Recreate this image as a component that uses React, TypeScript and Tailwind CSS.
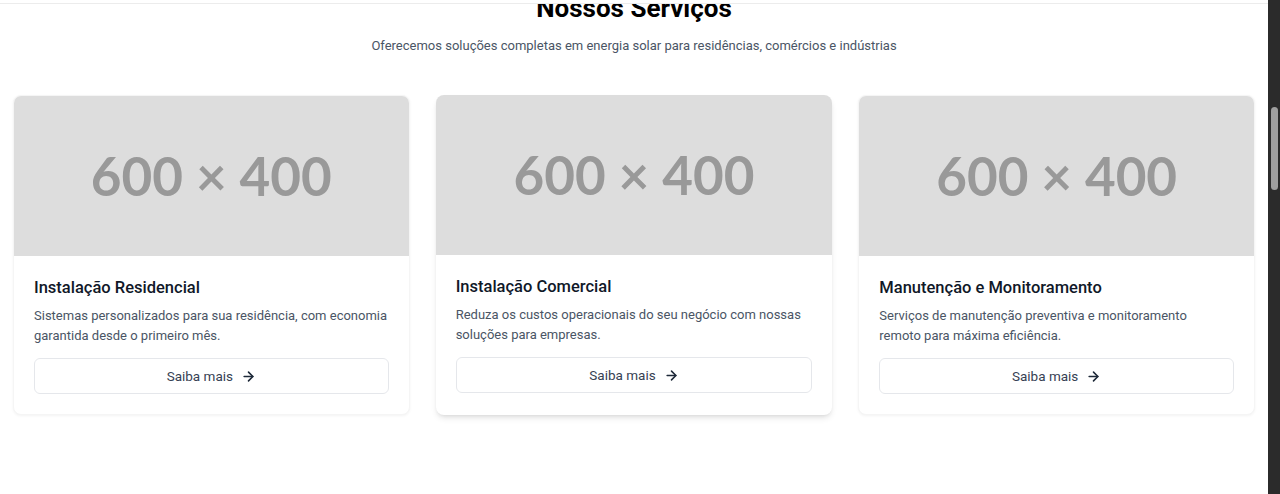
import { ArrowRight } from 'lucide-react'

const services = [
  {
    title: 'Instalação Residencial',
    lines: ['Sistemas personalizados para sua residência, com economia', 'garantida desde o primeiro mês.'],
  },
  {
    title: 'Instalação Comercial',
    lines: ['Reduza os custos operacionais do seu negócio com nossas', 'soluções para empresas.'],
    hovered: true,
  },
  {
    title: 'Manutenção e Monitoramento',
    lines: ['Serviços de manutenção preventiva e monitoramento', 'remoto para máxima eficiência.'],
  },
]

function Placeholder() {
  return (
    <div className="h-40 bg-[#dddddd] flex items-center justify-center">
      <span className="text-[53px] font-bold text-[#999999] font-['Lato',sans-serif]">600 × 400</span>
    </div>
  )
}

export default function App() {
  return (
    <div className="flex h-[494px] bg-white font-['Roboto',sans-serif]">
      <div className="flex-1 flex flex-col overflow-hidden">
        <div className="h-[3px] shrink-0 bg-white border-b border-[#ececec] box-content" />
        <div className="flex-1 overflow-hidden">
          <section className="-mt-[14px] px-[13px]">
            <div className="text-center mb-[39px]">
              <h2 className="text-[26px] leading-9 font-bold text-black mb-2.5">Nossos Serviços</h2>
              <p className="text-[13px] leading-5 text-gray-600">
                Oferecemos soluções completas em energia solar para residências, comércios e indústrias
              </p>
            </div>

            <div className="grid grid-cols-3 gap-[26px]">
              {services.map((s) => (
                <div
                  key={s.title}
                  className={`bg-white rounded-lg overflow-hidden ${
                    s.hovered ? 'shadow-md' : 'shadow-[0_1px_3px_rgba(0,0,0,0.05)] border border-[#f5f5f5]'
                  }`}
                >
                  <Placeholder />
                  <div className="p-5">
                    <h3 className="text-[16.5px] font-medium text-gray-900 leading-6 mb-1.5">{s.title}</h3>
                    <p className="text-[13px] text-gray-600 leading-5">
                      {s.lines[0]}
                      <br />
                      {s.lines[1]}
                    </p>
                    <button className="mt-3 w-full h-9 border border-gray-200 rounded-md text-[13.5px] text-gray-700 flex items-center justify-center gap-2">
                      Saiba mais
                      <ArrowRight size={15} strokeWidth={2.5} className="text-gray-800" />
                    </button>
                  </div>
                </div>
              ))}
            </div>
          </section>
        </div>
      </div>

      <div className="w-3 shrink-0 bg-[#2b2b2b] pt-[107px] flex justify-center">
        <div className="w-[7px] h-[83px] rounded-full bg-[#9f9f9f]" />
      </div>
    </div>
  )
}
